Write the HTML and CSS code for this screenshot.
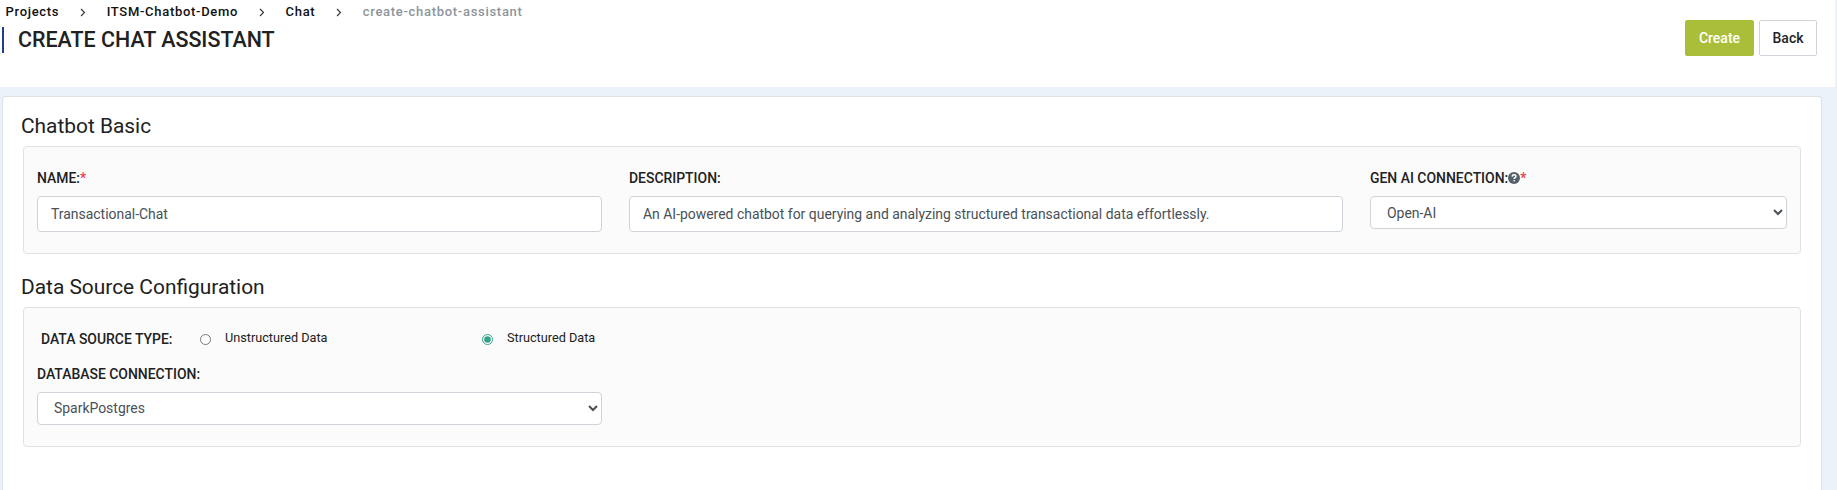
FILE: index.html
```html
<!DOCTYPE html>
<html lang="en">
<head>
<meta charset="utf-8">
<title>Create Chat Assistant</title>
<link rel="stylesheet" href="styles.css">
</head>
<body>
<header class="page-header">
  <div class="heading">
    <nav class="breadcrumb">
      <a class="crumb">Projects</a>
      <svg class="chevron" viewBox="0 0 6 9"><path d="M1 1l3.5 3.5L1 8"/></svg>
      <a class="crumb">ITSM-Chatbot-Demo</a>
      <svg class="chevron" viewBox="0 0 6 9"><path d="M1 1l3.5 3.5L1 8"/></svg>
      <a class="crumb">Chat</a>
      <svg class="chevron" viewBox="0 0 6 9"><path d="M1 1l3.5 3.5L1 8"/></svg>
      <span class="crumb current">create-chatbot-assistant</span>
    </nav>
    <h1 class="title"><span class="title-text">CREATE CHAT ASSISTANT</span></h1>
  </div>
  <div class="actions">
    <button class="btn primary">Create</button>
    <button class="btn">Back</button>
  </div>
</header>
<main class="card">
  <h2 class="section-title">Chatbot Basic</h2>
  <section class="panel basic">
    <div class="field">
      <label class="label">NAME:<span class="required">*</span></label>
      <input class="control" type="text" value="Transactional-Chat">
    </div>
    <div class="field">
      <label class="label">DESCRIPTION:</label>
      <input class="control" type="text" value="An AI-powered chatbot for querying and analyzing structured transactional data effortlessly.">
    </div>
    <div class="field">
      <label class="label">GEN AI CONNECTION:<svg class="help" viewBox="0 0 12 12"><circle cx="6" cy="6" r="6"/><path d="M4.100 4.600C4.200 3.300 5 2.800 6 2.800c1.100 0 1.900.6 1.900 1.600 0 1.300-1.700 1.300-1.700 2.500"/><rect x="5.300" y="7.900" width="1.700" height="1.600" rx=".7"/></svg><span class="required">*</span></label>
      <select class="control select"><option>Open-AI</option></select>
    </div>
  </section>
  <h2 class="section-title second">Data Source Configuration</h2>
  <section class="panel source">
    <div class="radio-row">
      <span class="label type-label">DATA SOURCE TYPE:</span>
      <label class="option"><input class="radio" type="radio" name="source"><span class="option-text">Unstructured Data</span></label>
      <label class="option"><input class="radio" type="radio" name="source" checked><span class="option-text">Structured Data</span></label>
    </div>
    <div class="field connection">
      <label class="label">DATABASE CONNECTION:</label>
      <select class="control select database"><option>SparkPostgres</option></select>
    </div>
  </section>
</main>
</body>
</html>
```
FILE: styles.css
```css
* { box-sizing: border-box; }
body {
  margin: 0;
  height: 490px;
  background: #eaf1f9;
  color: #212529;
  font-family: Roboto, sans-serif;
}
.page-header {
  display: flex;
  justify-content: space-between;
  width: 1835px;
  height: 87px;
  padding-right: 18px;
  background: #fff;
}
.breadcrumb {
  display: flex;
  align-items: center;
  height: 24px;
  padding-left: 5.5px;
}
.crumb {
  color: #111;
  font-size: 13px;
  font-weight: 500;
  line-height: 24px;
  letter-spacing: 0.7px;
}
.current { color: #8e959c; }
.chevron {
  width: 6px;
  height: 9px;
  margin: 0 20.7px;
  fill: none;
  stroke: #333;
  stroke-width: 1.1;
}
.title {
  display: flex;
  align-items: center;
  height: 26px;
  margin: 3px 0 0 2px;
  padding: 0 0 2px 14px;
  border-left: 2px solid #1d4287;
  font-size: 21.45px;
  font-weight: 500;
  color: #212121;
}
.actions {
  display: flex;
  gap: 5px;
  padding-top: 20px;
}
.btn {
  width: 58px;
  height: 36px;
  padding: 0;
  border: 1px solid #ced4da;
  border-radius: 2px;
  background: #fff;
  color: #212529;
  font: 500 14px Roboto, sans-serif;
}
.primary {
  width: 69px;
  border-color: #abbe3a;
  background: #abbe3a;
  color: #fff;
}
.card {
  width: 1820px;
  height: 394px;
  margin: 9px 0 0 2px;
  padding: 15px 20px 0 18px;
  border: 1px solid #dfe1e4;
  border-bottom: 0;
  border-radius: 4px 4px 0 0;
  background: #fff;
}
.section-title {
  height: 34px;
  margin: 0;
  font-size: 20.9px;
  font-weight: 400;
  line-height: 28px;
  color: #212121;
}
.second { margin-top: 19px; }
.panel {
  width: 1778px;
  margin-left: 2px;
  border: 1px solid #dfe1e4;
  border-radius: 4px;
  background: #fbfbfb;
}
.basic {
  display: grid;
  grid-template-columns: 565px 714px 417px;
  column-gap: 27px;
  height: 108px;
  padding: 21px 13px 0;
}
.field {
  display: flex;
  flex-direction: column;
}
.label {
  height: 28px;
  font-size: 13.95px;
  font-weight: 500;
  line-height: 20px;
  color: #212121;
}
.required { color: #ef3b45; }
.help {
  width: 12px;
  height: 12px;
  vertical-align: -1px;
  fill: #56606a;
}
.help path {
  fill: none;
  stroke: #fff;
  stroke-width: 1.5;
}
.help rect { fill: #fff; }
.control {
  width: 100%;
  height: 36px;
  padding: 0 13px;
  border: 1px solid #ced4da;
  border-radius: 4px;
  background: #fff;
  color: #495057;
  font: 400 13.95px Roboto, sans-serif;
}
.select {
  height: 33px;
  padding: 0 0 0 12px;
}
.database { padding-bottom: 1px; }
.source {
  height: 140px;
  padding: 20px 13px 0;
}
.radio-row {
  display: flex;
  height: 36px;
  padding-left: 4px;
}
.type-label {
  width: 159px;
  padding-top: 1px;
}
.option {
  display: flex;
  width: 282px;
  height: 20px;
}
.radio {
  width: 11px;
  height: 11px;
  margin: 6px 14px 0 0;
  accent-color: #36a086;
}
.option-text {
  font-size: 12.7px;
  line-height: 20px;
  color: #212121;
}
.connection { width: 565px; }
```
